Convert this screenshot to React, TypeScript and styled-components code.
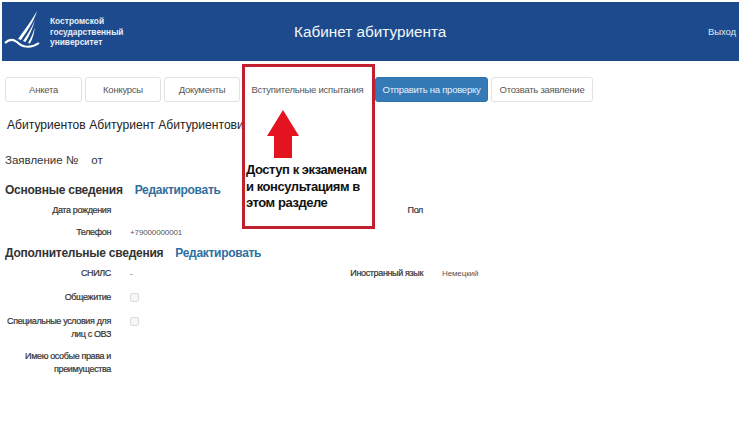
import styled, { createGlobalStyle } from 'styled-components';

const GlobalStyle = createGlobalStyle`
    html, body {
        margin: 0;
        padding: 0;
        background: #fff;
        font-family: 'Liberation Sans', Arial, sans-serif;
    }
`;

const Page = styled.div`
    position: relative;
    width: 739px;
    height: 432px;
    overflow: hidden;
    padding-top: 2px;
    box-sizing: border-box;
`;

const Header = styled.header`
    display: flex;
    align-items: center;
    height: 59px;
    margin-left: 2px;
    background: #1c4a8c;
    color: #fff;
`;

const Brand = styled.div`
    display: flex;
    align-items: center;
    width: 292px;
    padding-left: 2px;
    box-sizing: border-box;
`;

const BrandName = styled.div`
    margin-left: 6px;
    margin-top: 1px;
    font-size: 8.4px;
    font-weight: 700;
    line-height: 10.5px;
    color: #e8eef6;
`;

const HeaderTitle = styled.div`
    flex: 1;
    font-size: 15.3px;
    color: #f4f7fb;
`;

const Logout = styled.a`
    font-size: 9.5px;
    letter-spacing: -0.1px;
    color: #dfe7f2;
    margin-right: 3px;
`;

const Toolbar = styled.nav`
    display: flex;
    gap: 3px;
    margin: 16px 0 0 5px;
`;

const ActionButton = styled.button<{ $width: number; $primary?: boolean; $plain?: boolean }>`
    width: ${(p) => p.$width}px;
    height: 25px;
    padding: 0;
    border: 1px solid ${(p) => (p.$primary ? '#2e74ae' : p.$plain ? 'transparent' : '#e2e2e2')};
    border-radius: 3px;
    background: ${(p) => (p.$primary ? '#337ab7' : '#fff')};
    color: ${(p) => (p.$primary ? '#e9f1f8' : '#555')};
    font-family: inherit;
    font-size: 9.5px;
    letter-spacing: -0.25px;
    white-space: nowrap;
`;

const Applicant = styled.div`
    margin: 14px 0 0 7px;
    font-size: 12.1px;
    line-height: 18px;
    color: #222;
    white-space: nowrap;
`;

const Statement = styled.div`
    display: flex;
    gap: 13px;
    margin: 18px 0 0 5px;
    font-size: 11.5px;
    line-height: 16px;
    color: #333;
`;

const SectionHead = styled.div<{ $top: number }>`
    display: flex;
    gap: 12px;
    margin: ${(p) => p.$top}px 0 0 5px;
    font-size: 12px;
    font-weight: 700;
    letter-spacing: -0.25px;
    line-height: 16px;
    color: #333;
`;

const EditLink = styled.a`
    color: #2f6f9f;
    letter-spacing: -0.3px;
`;

const FormRow = styled.div<{ $top: number }>`
    display: grid;
    grid-template-columns: 111px 19px 170px 123px 19px 1fr;
    margin-top: ${(p) => p.$top}px;
    font-size: 9px;
    line-height: 13px;
`;

const FieldLabel = styled.div<{ $column?: number }>`
    grid-column: ${(p) => p.$column ?? 1};
    text-align: right;
    color: #333;
    letter-spacing: -0.36px;
    white-space: nowrap;
    -webkit-text-stroke: 0.2px #333;
`;

const FieldValue = styled.div<{ $column?: number }>`
    grid-column: ${(p) => p.$column ?? 3};
    font-size: 8px;
    letter-spacing: -0.12px;
    color: #555;
`;

const CheckMark = styled.div`
    grid-column: 3;
    width: 7px;
    height: 7px;
    margin-top: 2px;
    border: 1px solid #dcdcdc;
    border-radius: 2px;
    background: #f6f6f6;
`;

const Callout = styled.aside`
    position: absolute;
    left: 242px;
    top: 64px;
    width: 133px;
    height: 165px;
    box-sizing: border-box;
    border: 3px solid #c2202f;
`;

const CalloutCover = styled.div`
    position: absolute;
    left: 0;
    right: 0;
    top: 37px;
    bottom: 0;
    background: #fff;
`;

const CalloutArrow = styled.svg`
    position: absolute;
    left: 22px;
    top: 43px;
`;

const CalloutText = styled.div`
    position: absolute;
    left: 1px;
    top: 95px;
    font-size: 13px;
    font-weight: 700;
    line-height: 16.5px;
    letter-spacing: -0.45px;
    color: #111;
    white-space: nowrap;
`;

const Logo = () => (
    <svg width="40" height="42" viewBox="0 0 40 42" fill="none">
        <path d="M33 0 C28 9 21 18 14 28 L17 29 C24 19 30 10 33 0Z" fill="#fff" />
        <path d="M31 9 C28 16 24 23 19 30 L21.5 31 C26 24 29 16 31 9Z" fill="#fff" />
        <path d="M31 16 C29 22 27 27 24 32 L26 32.5 C29 27 30 22 31 16Z" fill="#fff" />
        <path d="M1 32 C5 28 9 28 13 31 C18 36 26 38 35 32" stroke="#fff" strokeWidth="2" />
    </svg>
);

export default function App() {
    return (
        <Page>
            <GlobalStyle />
            <Header>
                <Brand>
                    <Logo />
                    <BrandName>
                        Костромской
                        <br />
                        государственный
                        <br />
                        университет
                    </BrandName>
                </Brand>
                <HeaderTitle>Кабинет абитуриента</HeaderTitle>
                <Logout>Выход</Logout>
            </Header>

            <Toolbar>
                <ActionButton $width={77}>Анкета</ActionButton>
                <ActionButton $width={76}>Конкурсы</ActionButton>
                <ActionButton $width={76}>Документы</ActionButton>
                <ActionButton $width={129} $plain>
                    Вступительные испытания
                </ActionButton>
                <ActionButton $width={113} $primary>
                    Отправить на проверку
                </ActionButton>
                <ActionButton $width={102}>Отозвать заявление</ActionButton>
            </Toolbar>

            <Applicant>Абитуриентов Абитуриент Абитуриентович</Applicant>
            <Statement>
                <span>Заявление №</span>
                <span>от</span>
            </Statement>

            <SectionHead $top={14}>
                Основные сведения
                <EditLink>Редактировать</EditLink>
            </SectionHead>
            <FormRow $top={6}>
                <FieldLabel>Дата рождения</FieldLabel>
                <FieldLabel $column={4}>Пол</FieldLabel>
            </FormRow>
            <FormRow $top={9}>
                <FieldLabel>Телефон</FieldLabel>
                <FieldValue>+79000000001</FieldValue>
            </FormRow>

            <SectionHead $top={6}>
                Дополнительные сведения
                <EditLink>Редактировать</EditLink>
            </SectionHead>
            <FormRow $top={6}>
                <FieldLabel>СНИЛС</FieldLabel>
                <FieldValue>-</FieldValue>
                <FieldLabel $column={4}>Иностранный язык</FieldLabel>
                <FieldValue $column={6}>Немецкий</FieldValue>
            </FormRow>
            <FormRow $top={11}>
                <FieldLabel>Общежитие</FieldLabel>
                <CheckMark />
            </FormRow>
            <FormRow $top={11}>
                <FieldLabel>
                    Специальные условия для
                    <br />
                    лиц с ОВЗ
                </FieldLabel>
                <CheckMark />
            </FormRow>
            <FormRow $top={9}>
                <FieldLabel>
                    Имею особые права и
                    <br />
                    преимущества
                </FieldLabel>
            </FormRow>

            <Callout>
                <CalloutCover />
                <CalloutArrow width="32" height="48" viewBox="0 0 32 48">
                    <path d="M16 0 L32 26 L25 26 L25 48 L7 48 L7 26 L0 26 Z" fill="#e3141f" />
                </CalloutArrow>
                <CalloutText>
                    Доступ к экзаменам
                    <br />
                    и консультациям в
                    <br />
                    этом разделе
                </CalloutText>
            </Callout>
        </Page>
    );
}
